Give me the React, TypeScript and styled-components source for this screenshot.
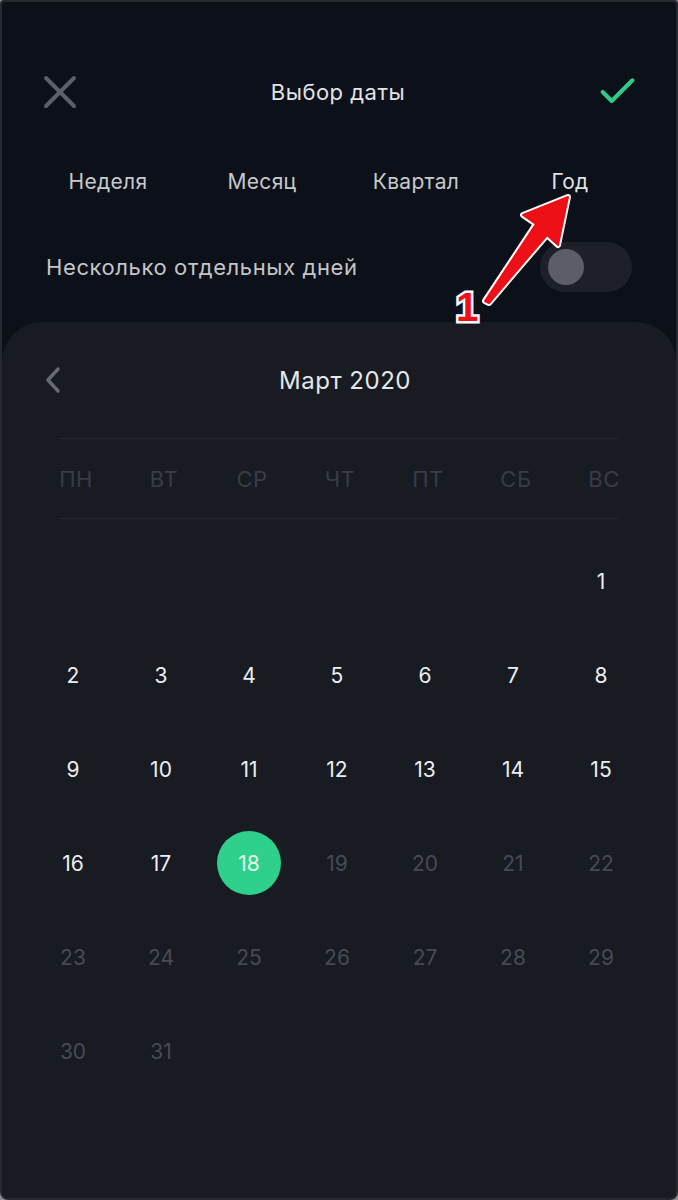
import React from 'react'
import styled, { createGlobalStyle } from 'styled-components'

const GlobalStyle = createGlobalStyle`
  html, body {
    margin: 0;
    padding: 0;
    background: #8a8c90;
  }
  * { box-sizing: border-box; }
`

const Frame = styled.div`
  position: relative;
  width: 678px;
  height: 1200px;
  display: flex;
  flex-direction: column;
  background: #0c1018;
  border: 2px solid #26292f;
  border-radius: 4px 4px 8px 8px;
  overflow: hidden;
  font-family: Inter, Roboto, "Noto Sans", sans-serif;
`

const Header = styled.div`
  height: 60px;
  margin-top: 60px;
  padding: 0 40px;
  display: flex;
  align-items: center;
  justify-content: space-between;
`

const IconButton = styled.button`
  width: 36px;
  height: 36px;
  padding: 0;
  border: none;
  background: none;
  display: flex;
  align-items: center;
  justify-content: center;
`

const Title = styled.div`
  font-size: 22px;
  letter-spacing: 0.5px;
  color: #e2e3e6;
  margin-left: -2px;
`

const Tabs = styled.div`
  margin-top: 39px;
  height: 40px;
  padding: 0 29px;
  display: grid;
  grid-template-columns: repeat(4, 1fr);
  align-items: center;
`

const Tab = styled.button<{ $active?: boolean }>`
  border: none;
  background: none;
  padding: 0;
  font-family: inherit;
  font-size: 21px;
  letter-spacing: 0.3px;
  color: ${p => (p.$active ? '#e2e3e6' : '#c7c8cc')};
  text-align: center;
`

const ToggleRow = styled.div`
  margin-top: 41px;
  height: 50px;
  padding: 0 44px 0 44px;
  display: flex;
  align-items: center;
  justify-content: space-between;
`

const ToggleLabel = styled.span`
  font-size: 22px;
  letter-spacing: 0.6px;
  color: #c4c5c9;
`

const Switch = styled.div<{ $on?: boolean }>`
  width: 92px;
  height: 50px;
  border-radius: 25px;
  background: ${p => (p.$on ? '#2ed08c' : '#1d2028')};
  padding: 7px 8px;
  display: flex;
  justify-content: ${p => (p.$on ? 'flex-end' : 'flex-start')};
`

const Knob = styled.div`
  width: 36px;
  height: 36px;
  border-radius: 50%;
  background: #5b5d67;
`

const Card = styled.div`
  flex: 1;
  margin-top: 30px;
  background: #181b22;
  border-radius: 40px 40px 6px 6px;
  padding-top: 36px;
`

const MonthHeader = styled.div`
  height: 44px;
  padding: 0 40px;
  display: flex;
  align-items: center;
`

const MonthTitle = styled.div`
  flex: 1;
  text-align: center;
  font-size: 24px;
  letter-spacing: 0.5px;
  color: #e6e7ea;
  padding-left: 26px;
  padding-right: 36px;
`

const Divider = styled.div`
  height: 1px;
  margin: 0 58px 0 56px;
  background: #242730;
`

const Week = styled.div`
  margin-top: 36px;
`

const WeekDays = styled.div`
  height: 79px;
  display: grid;
  grid-template-columns: repeat(7, 88px);
  padding-left: 30px;
  align-items: center;
`

const WeekDay = styled.div`
  text-align: center;
  font-size: 22px;
  letter-spacing: 0.5px;
  color: #393c45;
`

const Days = styled.div`
  display: grid;
  grid-template-columns: repeat(7, 88px);
  grid-auto-rows: 94px;
  padding-left: 27px;
  margin-top: 15px;
`

const Day = styled.div<{ $muted?: boolean; $selected?: boolean }>`
  display: flex;
  align-items: center;
  justify-content: center;
  font-size: 21px;
  color: ${p => (p.$selected ? '#e3f6ec' : p.$muted ? '#474a53' : '#eceef1')};
`

const Selected = styled.span`
  width: 64px;
  height: 64px;
  border-radius: 50%;
  background: #2ed08c;
  display: flex;
  align-items: center;
  justify-content: center;
`

const Annotation = styled.div`
  position: absolute;
  left: 0;
  top: 0;
  width: 678px;
  height: 340px;
  pointer-events: none;
`

const Marker = styled.span`
  position: absolute;
  left: 454px;
  top: 285px;
  font-family: "Liberation Sans", Arial, sans-serif;
  font-weight: 700;
  font-size: 40px;
  line-height: 1;
  color: #ee1017;
  -webkit-text-stroke: 5px #ffffff;
  paint-order: stroke fill;
`

const weekDays = ['ПН', 'ВТ', 'СР', 'ЧТ', 'ПТ', 'СБ', 'ВС']
const today = 18

export default function App () {
  const cells: (number | null)[] = [...Array(6).fill(null), ...Array.from({ length: 31 }, (_, i) => i + 1)]

  return (
    <Frame>
      <GlobalStyle />
      <Header>
        <IconButton type='button'>
          <svg width='34' height='34' viewBox='0 0 34 34'>
            <path d='M3 3 L31 31 M31 3 L3 31' stroke='#5c5f69' strokeWidth='4' strokeLinecap='round' />
          </svg>
        </IconButton>
        <Title>Выбор даты</Title>
        <IconButton type='button'>
          <svg width='40' height='32' viewBox='0 0 40 32'>
            <path d='M3 16 L13 26 L36 3' fill='none' stroke='#2ecc88' strokeWidth='4.5' strokeLinecap='round' strokeLinejoin='round' />
          </svg>
        </IconButton>
      </Header>

      <Tabs>
        <Tab type='button'>Неделя</Tab>
        <Tab type='button'>Месяц</Tab>
        <Tab type='button'>Квартал</Tab>
        <Tab type='button' $active>Год</Tab>
      </Tabs>

      <ToggleRow>
        <ToggleLabel>Несколько отдельных дней</ToggleLabel>
        <Switch><Knob /></Switch>
      </ToggleRow>

      <Card>
        <MonthHeader>
          <svg width='22' height='28' viewBox='0 0 22 28'>
            <path d='M16 3 L6 14 L16 25' fill='none' stroke='#666972' strokeWidth='3.5' strokeLinecap='round' strokeLinejoin='round' />
          </svg>
          <MonthTitle>Март 2020</MonthTitle>
        </MonthHeader>
        <Week />
        <Divider />
        <WeekDays>
          {weekDays.map(d => <WeekDay key={d}>{d}</WeekDay>)}
        </WeekDays>
        <Divider />
        <Days>
          {cells.map((d, i) => (
            <Day key={i} $muted={d !== null && d > today} $selected={d === today}>
              {d === today ? <Selected>{d}</Selected> : d}
            </Day>
          ))}
        </Days>
      </Card>

      <Annotation>
        <svg width='678' height='340' viewBox='0 0 678 340'>
          <path
            d='M566 195 L521 213 L534 222 L483 299 L487 301 L545 233 L556 243 Z'
            fill='#ffffff' stroke='#ffffff' strokeWidth='6' strokeLinejoin='round'
          />
          <path
            d='M566 195 L521 213 L534 222 L483 299 L487 301 L545 233 L556 243 Z'
            fill='#ee1017' stroke='#ee1017' strokeWidth='2' strokeLinejoin='round'
          />
        </svg>
        <Marker>1</Marker>
      </Annotation>
    </Frame>
  )
}
